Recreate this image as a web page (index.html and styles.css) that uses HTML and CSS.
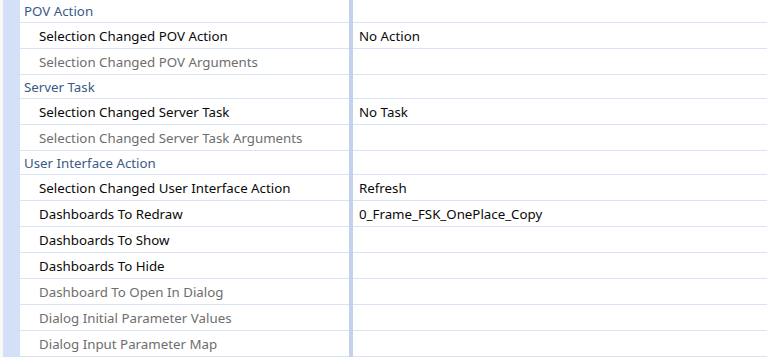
FILE: index.html
```html
<!DOCTYPE html>
<html>
<head>
<meta charset="utf-8">
<link rel="stylesheet" href="styles.css">
</head>
<body>
<div class="sheet">
  <div class="strip"></div>
  <div class="rows">
    <div class="row cat"><div class="name">POV Action</div><div class="div"></div><div class="val"></div></div>
    <div class="row"><div class="name">Selection Changed POV Action</div><div class="div"></div><div class="val">No Action</div></div>
    <div class="row dim"><div class="name">Selection Changed POV Arguments</div><div class="div"></div><div class="val"></div></div>
    <div class="row cat"><div class="name">Server Task</div><div class="div"></div><div class="val"></div></div>
    <div class="row"><div class="name">Selection Changed Server Task</div><div class="div"></div><div class="val">No Task</div></div>
    <div class="row dim"><div class="name">Selection Changed Server Task Arguments</div><div class="div"></div><div class="val"></div></div>
    <div class="row cat"><div class="name">User Interface Action</div><div class="div"></div><div class="val"></div></div>
    <div class="row"><div class="name">Selection Changed User Interface Action</div><div class="div"></div><div class="val">Refresh</div></div>
    <div class="row"><div class="name">Dashboards To Redraw</div><div class="div"></div><div class="val">0_Frame_FSK_OnePlace_Copy</div></div>
    <div class="row"><div class="name">Dashboards To Show</div><div class="div"></div><div class="val"></div></div>
    <div class="row"><div class="name">Dashboards To Hide</div><div class="div"></div><div class="val"></div></div>
    <div class="row dim"><div class="name">Dashboard To Open In Dialog</div><div class="div"></div><div class="val"></div></div>
    <div class="row dim"><div class="name">Dialog Initial Parameter Values</div><div class="div"></div><div class="val"></div></div>
    <div class="row dim"><div class="name">Dialog Input Parameter Map</div><div class="div"></div><div class="val"></div></div>
  </div>
</div>
</body>
</html>
```
FILE: styles.css
```css
html, body {
  margin: 0;
  padding: 0;
  background: #f8f8f8;
  overflow: hidden;
}
.sheet {
  display: flex;
  height: 357px;
  font-family: "Noto Sans", "Open Sans", sans-serif;
  font-size: 13.3px;
  color: #0a0a0a;
}
.strip {
  width: 17px;
  margin-left: 3px;
  background: #d4e0f7;
  flex: none;
}
.rows {
  flex: 1;
  background: #fff;
  margin-top: -1px;
}
.row {
  display: grid;
  grid-template-columns: 329px 4px 1fr;
  height: 26px;
}
.row.cat {
  height: 24px;
}
.name, .val {
  border-bottom: 1px solid #d8e3f6;
  display: flex;
  align-items: center;
  white-space: nowrap;
  overflow: hidden;
}
.name {
  padding-left: 19px;
}
.val {
  padding-left: 6px;
}
.cat .name {
  padding-left: 4px;
  color: #3b5a86;
}
.dim .name {
  color: #6e6e6e;
}
.div {
  background: #c3d1eb;
}
```
